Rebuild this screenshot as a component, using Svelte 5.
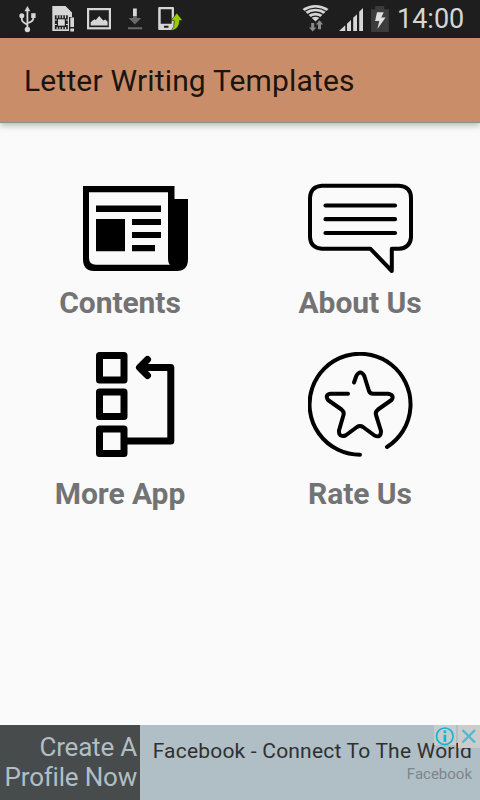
<script>
  const tiles = [
    { label: 'Contents', icon: 'news' },
    { label: 'About Us', icon: 'chat' },
    { label: 'More App', icon: 'flow' },
    { label: 'Rate Us', icon: 'star' }
  ];
</script>

<div class="screen">
  <div class="status">
    <svg class="left" width="200" height="38" viewBox="0 0 200 38">
      <g fill="none" stroke="#d6d6d6" stroke-width="1.8">
        <path d="M27.4 9V29M21.8 16v3.2q0 3 5.6 5.4M33.3 16v2.5q0 3-5.9 4.7" />
      </g>
      <g fill="#d6d6d6">
        <path d="M27.4 6l2.9 5.2h-5.8z" />
        <circle cx="21.8" cy="15.8" r="2.5" />
        <rect x="31.2" y="13.2" width="4.4" height="4.8" />
        <circle cx="27.4" cy="29.5" r="2.7" />
        <path d="M52.3 6H65.5L72 12.5V17H69V31H52.3z" />
        <path d="M70.3 17.5h3.7V27h-3.7zM70.3 28.4h3.7v3.2h-3.7z" />
      </g>
      <path d="M54.8 15.3h13v14H54.800z" fill="#1e1e1e" />
      <g stroke="#d6d6d6" stroke-width="1.200" fill="none">
        <path d="M57.200 15.300v3M60 15.300v3M62.700 15.300v3M65.500 15.300v3M57.200 27v2.500M60 27v2.500M62.700 27v2.500M65.500 27v2.500M54.800 20h2M54.800 24.500h2M66 20h2M66 24.500h2" />
      </g>
      <rect x="58" y="19.300" width="6.800" height="6.400" fill="#d6d6d6" />
      <rect x="88.100" y="9.100" width="21.800" height="19.200" fill="none" stroke="#d6d6d6" stroke-width="2.200" />
      <path d="M90.700 25.600v-3.400l3.500-3 1.600.8 3.400-4 4 4.500 2-1 2.400 2.300v3.800z" fill="#d6d6d6" />
      <rect x="133" y="8.500" width="3.800" height="7.500" fill="#d6d6d6" />
      <path d="M133 16h3.800v2h4.400l-6.300 6.400-6.300-6.400h4.400zM128 27.200h14.200v2H128z" fill="#696969" />
      <path fill-rule="evenodd" d="M159.200 7H173q1 0 1 1v21q0 1-1 1H159.200q-1 0-1-1V8q0-1 1-1zM160.700 9.300v14.500h11V9.300zM164 25.700v2h4.500v-2z" fill="#d6d6d6" />
      <path d="M176.800 13l5.800 7.500h-3.100q.3 8.500-8.300 10.300 3.400-3.200 3-10.300h-3.200z" fill="#99cc00" stroke="#1e1e1e" stroke-width=".6" />
    </svg>
    <svg class="signal" width="100" height="38" viewBox="296 0 100 38">
      <path d="M315.500 21.500L302.500 9q13-8 26 0z" fill="#d6d6d6" />
      <g fill="none" stroke="#1e1e1e" stroke-width="1.300">
        <path d="M304 11.700q11.500-7.200 23 0M306.800 15q8.700-6 17.400 0M310 18.200q5.500-4 11 0" />
      </g>
      <path d="M311.200 23h3v4.500h2.200l-3.700 4-3.700-4h2.200zM318 29.200h3v-4.700h2.200l-3.700-4.200-3.700 4.200h2.200z" fill="#8b8b8b" />
      <path d="M339 31l6.300-5.800V31zM347 23.800l4-3.700V31h-4zM353.200 17.800l3.800-3.500V31h-3.800zM359.200 11.800L363 8v23h-3.800z" fill="#d6d6d6" />
      <path d="M375.200 6h9v3.200h4.600V32h-17.700V9.200h4.100z" fill="#3c3c3c" />
      <path d="M377 12.200h6.700l-2.400 5.300h4.300l-8.200 11.600 1.900-8.100h-4.200z" fill="#dedede" />
    </svg>
    <span class="clock">14:00</span>
  </div>

  <header><h1>Letter Writing Templates</h1></header>

  <main>
    {#each tiles as tile}
      <button class="tile {tile.icon}">
        <svg width="105" height="105" viewBox="0 0 105 105" fill="none" stroke="#000" stroke-linecap="round" stroke-linejoin="round">
          {#if tile.icon === 'news'}
            <path fill="#000" stroke="none" fill-rule="evenodd" d="M0 10H91.500V23H105V83Q105 95 94 95H11Q0 95 0 83zM6 16.300V82Q6 88.800 13 88.800H87Q85 87 85 82V16.300z" />
            <path fill="#000" stroke="none" d="M13 29.500H78V36H13zM13 43H42V75.300H13zM49 43H78V49H49zM49 56H78V62H49zM49 69H72V75.300H49z" />
          {:else if tile.icon === 'chat'}
            <path stroke-width="4" d="M14 9.800H91Q103 10.500 103 22V61.500Q102 72 91 72.800H83.800V95L62.500 72.800H14Q2.500 72 2 61V22Q2.500 10.500 14 9.800z" />
            <path stroke-width="4.200" d="M17.500 29.500H87M17.500 43.200H87M17.500 57H87" />
          {:else if tile.icon === 'flow'}
            <path stroke-width="7" d="M16.500 3.500H41V28H16.500zM16.500 40H41V64.500H16.500zM16.500 77H41V101.500H16.500zM44 89H87.800V15.400H58M64.500 7.500L56.500 15.500L64.500 23.500" />
          {:else}
            <path stroke-width="4" d="M52 102.800A50.500 50.500 0 1 1 79 95" />
            <path stroke-width="4" d="M46 30.500L48.300 24Q52.300 17 56.300 24L61 39Q62 41.800 65 41.800H80Q87 43 83.500 48L70 57.500Q67 60 68 63L73 79Q73 86.500 66.500 83.500L55 75Q52 73 49 75L37.500 83.500Q30.500 85.500 31 78.500L35.500 63Q36.500 60 33.500 57.500L20 48Q16.500 42.500 23 41.800H40" />
          {/if}
        </svg>
        <span>{tile.label}</span>
      </button>
    {/each}
  </main>

  <aside>
    <div class="promo"><span>Create A</span><span>Profile Now</span></div>
    <div class="copy">
      <span class="headline">Facebook - Connect To The World</span>
      <span class="brand">Facebook</span>
    </div>
    <div class="choices">
      <svg width="22" height="23" viewBox="0 0 22 23">
        <rect width="22" height="20" fill="#c6cbcd" />
        <circle cx="10.800" cy="11.300" r="8.300" fill="none" stroke="#12b4d2" stroke-width="1.600" />
        <path d="M9.600 5.500h2.600v2.500H9.600zM9.600 9.700h2.600v7.100H9.600z" fill="#12b4d2" />
      </svg>
      <svg width="22" height="23" viewBox="0 0 22 23">
        <rect width="22" height="23" fill="#cccccc" />
        <path d="M4.500 5L17 17.500M17 5L4.500 17.500" stroke="#4bbcd0" stroke-width="2.400" />
      </svg>
    </div>
  </aside>
</div>

<style>
  :global(body) { margin: 0; }
  .screen {
    width: 480px;
    height: 800px;
    display: flex;
    flex-direction: column;
    background: #fafafa;
    font-family: Roboto, sans-serif;
    overflow: hidden;
  }
  .status {
    height: 38px;
    flex: none;
    display: flex;
    background: #1e1e1e;
  }
  .signal { margin-left: 96px; }
  .clock {
    margin-left: 1px;
    font-size: 27px;
    line-height: 38px;
    color: #d6d6d6;
    white-space: nowrap;
  }
  header {
    height: 84px;
    flex: none;
    display: flex;
    align-items: center;
    padding-left: 24px;
    background: #c98e69;
    border-bottom: 1px solid #8f8f8f;
    box-shadow: 0 2px 7px rgba(0, 0, 0, 0.3);
  }
  h1 {
    margin: 2px 0 0;
    font-size: 30px;
    line-height: 36px;
    font-weight: 400;
    letter-spacing: 0.17px;
    color: #1c140f;
    white-space: nowrap;
  }
  main {
    flex: 1;
    display: grid;
    grid-template-columns: 240px 240px;
    grid-template-rows: 176px 176px;
    padding-top: 53px;
  }
  .tile {
    display: flex;
    flex-direction: column;
    padding: 0;
    border: 0;
    background: none;
    font: bold 30px/36px Roboto, sans-serif;
    letter-spacing: -0.07px;
    color: #737373;
  }
  .tile svg { margin-left: 68px; flex: none; }
  .news svg, .flow svg { margin-left: 83px; }
  .tile span {
    align-self: center;
    margin-top: 4px;
    white-space: nowrap;
  }
  .flow span, .star span { margin-top: 19px; }
  aside {
    position: relative;
    height: 75px;
    flex: none;
    display: flex;
    background: #b0bec5;
  }
  .promo {
    box-sizing: border-box;
    width: 140px;
    padding: 7px 3px 0 0;
    display: flex;
    flex-direction: column;
    align-items: flex-end;
    background: #474b4c;
    color: #b0bec5;
    font-size: 26px;
    line-height: 30px;
    letter-spacing: -0.2px;
    white-space: nowrap;
  }
  .copy {
    flex: 1;
    display: flex;
    flex-direction: column;
    align-items: flex-end;
    padding: 13px 8px 0 0;
    white-space: nowrap;
  }
  .headline {
    font-size: 21px;
    line-height: 26px;
    letter-spacing: 0.2px;
    color: #303030;
  }
  .brand {
    font-size: 15px;
    line-height: 20px;
    color: #7c868b;
  }
  .choices {
    position: absolute;
    top: 0;
    right: 0;
    display: flex;
    gap: 2px;
  }
</style>
